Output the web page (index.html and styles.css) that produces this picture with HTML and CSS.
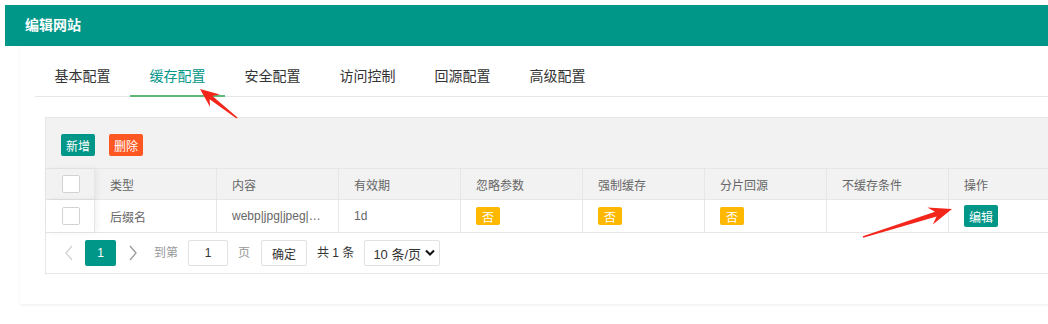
FILE: index.html
```html
<!DOCTYPE html>
<html lang="zh-CN">
<head>
<meta charset="utf-8">
<title>编辑网站</title>
<link rel="stylesheet" href="styles.css">
</head>
<body>
<div class="layer">
  <div class="layer-title">编辑网站</div>
  <div class="layer-content">
    <div class="card">
      <ul class="tabs">
        <li>基本配置</li>
        <li class="active">缓存配置</li>
        <li>安全配置</li>
        <li>访问控制</li>
        <li>回源配置</li>
        <li>高级配置</li>
      </ul>
      <div class="tab-body">
        <div class="tbl">
          <div class="toolbar">
            <span class="btn btn-teal">新增</span>
            <span class="btn btn-red">删除</span>
          </div>
          <div class="row head">
            <div class="cell chk"><span class="checkbox"></span></div>
            <div class="cell">类型</div>
            <div class="cell">内容</div>
            <div class="cell">有效期</div>
            <div class="cell">忽略参数</div>
            <div class="cell">强制缓存</div>
            <div class="cell">分片回源</div>
            <div class="cell">不缓存条件</div>
            <div class="cell">操作</div>
          </div>
          <div class="row body">
            <div class="cell chk"><span class="checkbox"></span></div>
            <div class="cell">后缀名</div>
            <div class="cell latin">webp|jpg|jpeg|…</div>
            <div class="cell latin">1d</div>
            <div class="cell"><span class="badge">否</span></div>
            <div class="cell"><span class="badge">否</span></div>
            <div class="cell"><span class="badge">否</span></div>
            <div class="cell"></div>
            <div class="cell"><span class="btn btn-teal">编辑</span></div>
          </div>
          <div class="pager">
            <span class="pg-arrow disabled">
              <svg width="10" height="16" viewBox="0 0 10 16"><path d="M8 1 L2 8 L8 15" fill="none" stroke="currentColor" stroke-width="1.3"/></svg>
            </span>
            <span class="pg-cur">1</span>
            <span class="pg-arrow">
              <svg width="10" height="16" viewBox="0 0 10 16"><path d="M2 1 L8 8 L2 15" fill="none" stroke="currentColor" stroke-width="1.3"/></svg>
            </span>
            <span class="pg-text">到第</span>
            <span class="pg-input">1</span>
            <span class="pg-text">页</span>
            <span class="pg-btn">确定</span>
            <span class="pg-count">共 1 条</span>
            <span class="pg-select">10 条/页
              <svg width="10" height="8" viewBox="0 0 10 8"><path d="M1 1.5 L5 5.5 L9 1.5" fill="none" stroke="#111" stroke-width="2"/></svg>
            </span>
          </div>
        </div>
      </div>
    </div>
  </div>
</div>
<svg class="annot" width="1048" height="324" viewBox="0 0 1048 324">
  <polygon points="200,89 219.9,94.4 212.4,95.9 237.5,117.4 236.5,118.6 209.6,99.3 210.1,107" fill="#f3261b"/>
  <polygon points="952,209 927.4,207.4 935,211.8 862.8,236.2 863.2,237.8 936.6,216.6 932.8,224.6" fill="#f3261b"/>
</svg>
</body>
</html>
```
FILE: styles.css
```css
html, body {
  margin: 0;
  padding: 0;
  background: #fff;
  overflow: hidden;
  width: 1048px;
  height: 324px;
}
body {
  position: relative;
  font-family: "Liberation Sans", "Noto Sans CJK SC", sans-serif;
  color: #333;
}
.layer {
  padding: 5px 0 0 5px;
  width: 1180px;
}
.layer-title {
  height: 41px;
  line-height: 41px;
  background: #009688;
  color: #fff;
  font-size: 14px;
  font-weight: bold;
  padding-left: 20px;
}
.layer-content {
  padding-left: 15px;
}
.card {
  background: #fff;
  box-shadow: 0 1px 3px 0 rgba(0,0,0,.07);
  padding: 10px 15px 20px;
}
.tabs {
  list-style: none;
  margin: 0;
  padding: 0;
  display: flex;
  height: 40px;
  border-bottom: 1px solid #e6e6e6;
}
.tabs li {
  width: 95px;
  text-align: center;
  line-height: 40px;
  font-size: 14px;
  color: #333;
  position: relative;
}
.tabs li.active {
  color: #009688;
}
.tabs li.active::after {
  content: "";
  position: absolute;
  left: 0;
  right: 0;
  bottom: -1px;
  height: 2px;
  background: #5fb878;
}
.tab-body {
  padding: 10px;
}
.tbl {
  margin-top: 10px;
  border: 1px solid #e6e6e6;
  border-right: none;
  font-size: 12px;
  color: #666;
}
.toolbar {
  height: 51px;
  box-sizing: border-box;
  padding: 16px 15px 0;
  background: #f2f2f2;
  border-bottom: 1px solid #e6e6e6;
  display: flex;
  gap: 14px;
  align-items: flex-start;
}
.btn {
  display: inline-flex;
  align-items: center;
  justify-content: center;
  width: 34px;
  height: 22px;
  border-radius: 2px;
  color: #fff;
  font-size: 12px;
}
.btn-teal { background: #009688; }
.btn-red { background: #ff5722; }
.row {
  display: flex;
  border-bottom: 1px solid #e6e6e6;
}
.row.head {
  height: 30px;
  background: #f2f2f2;
}
.row.body {
  height: 32px;
  background: #fff;
}
.cell {
  width: 122px;
  flex: none;
  box-sizing: border-box;
  border-right: 1px solid #e6e6e6;
  padding-left: 15px;
  display: flex;
  align-items: center;
  white-space: nowrap;
}
.cell.chk {
  width: 49px;
  padding-left: 16px;
  position: relative;
  box-shadow: 2px 0 6px rgba(0,0,0,.06);
  z-index: 1;
}
.row.head .cell.chk { background: #f2f2f2; }
.row.body .cell.chk { background: #fff; }
.checkbox {
  width: 16px;
  height: 16px;
  border: 1px solid #d2d2d2;
  border-radius: 2px;
  background: #fff;
}
.badge {
  display: inline-flex;
  align-items: center;
  justify-content: center;
  width: 24px;
  height: 18px;
  background: #ffb800;
  color: #fff;
  border-radius: 2px;
  font-size: 12px;
}
.pager {
  height: 40px;
  box-sizing: border-box;
  padding: 7px 6px 0;
  display: flex;
  align-items: flex-start;
  font-size: 12px;
  color: #333;
}
.pg-arrow {
  width: 33px;
  height: 26px;
  display: flex;
  align-items: center;
  justify-content: center;
  color: #999;
}
.pg-arrow.disabled { color: #d2d2d2; }
.pg-cur {
  width: 31px;
  height: 26px;
  background: #009688;
  color: #fff;
  border-radius: 2px;
  display: flex;
  align-items: center;
  justify-content: center;
}
.pg-text {
  height: 26px;
  line-height: 26px;
  color: #999;
  margin-left: 5px;
  margin-right: 10px;
}
.pg-text + .pg-btn { margin-left: 1px; }
.pg-input, .pg-btn, .pg-select {
  height: 26px;
  box-sizing: border-box;
  border: 1px solid #e2e2e2;
  border-radius: 2px;
  display: flex;
  align-items: center;
  justify-content: center;
  background: #fff;
  color: #333;
}
.pg-input {
  width: 40px;
  margin-right: 5px;
}
.pg-btn {
  width: 46px;
}
.pg-count {
  height: 26px;
  line-height: 26px;
  margin-left: 10px;
  margin-right: 10px;
}
.pg-select {
  width: 76px;
  justify-content: flex-start;
  padding-left: 8px;
  gap: 4px;
  font-size: 13px;
}
.annot {
  position: absolute;
  left: 0;
  top: 0;
  pointer-events: none;
}
```
